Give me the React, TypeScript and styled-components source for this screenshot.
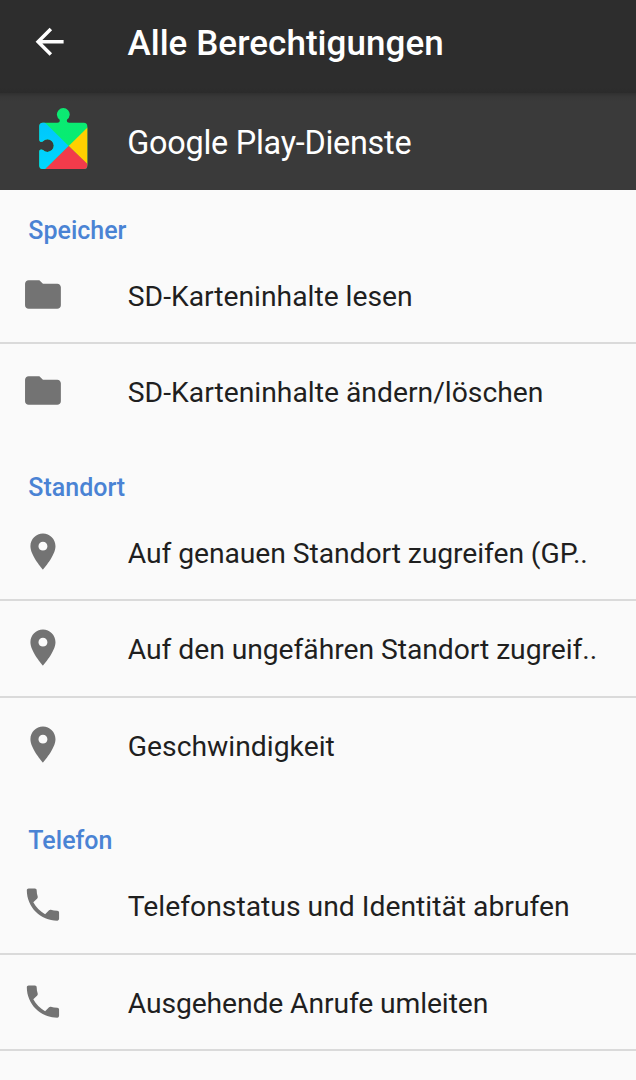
import React from 'react';
import styled, { createGlobalStyle } from 'styled-components';

const GlobalStyle = createGlobalStyle`
  * { box-sizing: border-box; }
  body { margin: 0; background: #fafafa; font-family: Roboto, sans-serif; color: #1f1f1f; overflow: hidden; }
`;
const Screen = styled.main`
  height: 1080px;
  overflow: hidden;
  background: #fafafa;
`;
const Bar = styled.header`
  height: 93px;
  display: flex;
  align-items: center;
  padding: 0 0 10px 28px;
  background: linear-gradient(#2d2d2d 88px, #2b2b2b 93px);
`;
const BackIcon = styled.svg`
  width: 42px;
  height: 42px;
  margin-right: 57.4px;
  flex: none;
  fill: #fff;
`;
const Title = styled.h1`
  margin: 0;
  padding-top: 4px;
  font-size: 35px;
  line-height: 44px;
  font-weight: 500;
  letter-spacing: 0.06px;
  color: #fff;
  white-space: nowrap;
`;
const AppBar = styled.div`
  height: 97px;
  display: flex;
  align-items: center;
  padding: 0 0 2px 35px;
  background: linear-gradient(#303030 0, #383838 4px, #3a3a3a 8px);
`;
const AppIcon = styled.svg`
  width: 56px;
  height: 70px;
  margin-right: 36.3px;
  flex: none;
`;
const AppName = styled.div`
  padding-top: 5px;
  font-size: 32.4px;
  line-height: 40px;
  letter-spacing: -0.26px;
  color: #fff;
  white-space: nowrap;
`;
const Section = styled.section``;
const Heading = styled.h2<{ $first: boolean }>`
  margin: 0;
  height: ${p => (p.$first ? 57.8 : 64.2)}px;
  padding: ${p => (p.$first ? 25 : 31)}px 0 0 28.3px;
  font-size: 25px;
  line-height: 32px;
  font-weight: 500;
  color: #4a83d4;
`;
const Row = styled.div<{ $line: boolean }>`
  height: 96.4px;
  display: flex;
  align-items: center;
  padding: 0 0 1px 21px;
  border-bottom: 2px solid ${p => (p.$line ? '#dadada' : 'transparent')};
`;
const Glyph = styled.svg`
  width: 43px;
  height: 43px;
  margin-right: 63.8px;
  flex: none;
  fill: #737373;
`;
const Label = styled.span<{ $spacing: number }>`
  padding-top: 4.7px;
  font-size: 28.3px;
  line-height: 36px;
  white-space: nowrap;
  letter-spacing: ${p => p.$spacing}px;
`;

const paths = {
  folder: 'M10 4H4c-1.1 0-1.99.9-1.99 2L2 18c0 1.1.9 2 2 2h16c1.1 0 2-.9 2-2V8c0-1.1-.9-2-2-2h-8l-2-2z',
  pin: 'M12 2C8.13 2 5 5.13 5 9c0 5.25 7 13 7 13s7-7.75 7-13c0-3.87-3.13-7-7-7zm0 9.5c-1.38 0-2.5-1.12-2.5-2.5s1.12-2.5 2.5-2.5 2.5 1.12 2.5 2.5-1.12 2.5-2.5 2.5z',
  phone: 'M6.62 10.79c1.44 2.83 3.76 5.14 6.59 6.59l2.2-2.2c.27-.27.67-.36 1.02-.24 1.12.37 2.33.57 3.57.57.55 0 1 .45 1 1V20c0 .55-.45 1-1 1-9.39 0-17-7.61-17-17 0-.55.45-1 1-1h3.5c.55 0 1 .45 1 1 0 1.25.2 2.45.57 3.57.11.35.03.74-.25 1.02l-2.2 2.2z',
};

type Item = { text: string; spacing: number };
const groups: { name: string; icon: keyof typeof paths; items: Item[]; more?: boolean }[] = [
  {
    name: 'Speicher',
    icon: 'folder',
    items: [
      { text: 'SD-Karteninhalte lesen', spacing: -0.02 },
      { text: 'SD-Karteninhalte ändern/löschen', spacing: 0 },
    ],
  },
  {
    name: 'Standort',
    icon: 'pin',
    items: [
      { text: 'Auf genauen Standort zugreifen (GP..', spacing: -0.08 },
      { text: 'Auf den ungefähren Standort zugreif..', spacing: -0.06 },
      { text: 'Geschwindigkeit', spacing: 0 },
    ],
  },
  {
    name: 'Telefon',
    icon: 'phone',
    items: [
      { text: 'Telefonstatus und Identität abrufen', spacing: 0 },
      { text: 'Ausgehende Anrufe umleiten', spacing: -0.12 },
    ],
    more: true,
  },
];

const PlayServicesIcon = () => (
  <AppIcon viewBox="35 106 56 70">
    <defs>
      <linearGradient id="cyan" x1="0" y1="0" x2="0" y2="1">
        <stop offset="0" stopColor="#00c3fb" />
        <stop offset="1" stopColor="#00d9ff" />
      </linearGradient>
      <linearGradient id="green" x1="0" y1="0" x2="0" y2="1">
        <stop offset="0" stopColor="#0de872" />
        <stop offset="1" stopColor="#00f272" />
      </linearGradient>
      <clipPath id="piece">
        <path d="M42.8 122.7H57.4C59.4 122.7 60.2 121.4 59.5 119.6A6.4 6.4 0 1 1 67.1 119.6C66.4 121.4 67.2 122.7 69.2 122.7H83.8A3.5 3.5 0 0 1 87.3 126.2V165.5A3.5 3.5 0 0 1 83.8 169H42.8A3.5 3.5 0 0 1 39.3 165.5V151.8C39.3 149.6 41 148.8 43 150A6.3 6.3 0 1 0 43 141.2C41 142.4 39.3 141.6 39.3 139.4V126.2A3.5 3.5 0 0 1 42.8 122.7Z" />
      </clipPath>
    </defs>
    <g clipPath="url(#piece)">
      <path d="M35 106H91V176H35Z" fill="url(#green)" />
      <path d="M35 112.9L68.7 146L38.2 176H35Z" fill="url(#cyan)" />
      <path d="M68.7 146L91 124V168Z" fill="#ffd000" />
      <path d="M68.7 146L91 167.5V176H38.2Z" fill="#f23b4b" />
    </g>
  </AppIcon>
);

export default function App() {
  return (
    <Screen>
      <GlobalStyle />
      <Bar>
        <BackIcon viewBox="-0.35 0.15 24 24">
          <path d="M20 11H7.83l5.59-5.59L12 4l-8 8 8 8 1.41-1.41L7.83 13H20v-2z" />
        </BackIcon>
        <Title>Alle Berechtigungen</Title>
      </Bar>
      <AppBar>
        <PlayServicesIcon />
        <AppName>Google Play-Dienste</AppName>
      </AppBar>
      {groups.map((group, g) => (
        <Section key={group.name}>
          <Heading $first={g === 0}>{group.name}</Heading>
          {group.items.map((item, i) => (
            <Row key={item.text} $line={!!group.more || i < group.items.length - 1}>
              <Glyph viewBox="-0.25 0 24 24">
                <path d={paths[group.icon]} />
              </Glyph>
              <Label $spacing={item.spacing}>{item.text}</Label>
            </Row>
          ))}
        </Section>
      ))}
    </Screen>
  );
}
